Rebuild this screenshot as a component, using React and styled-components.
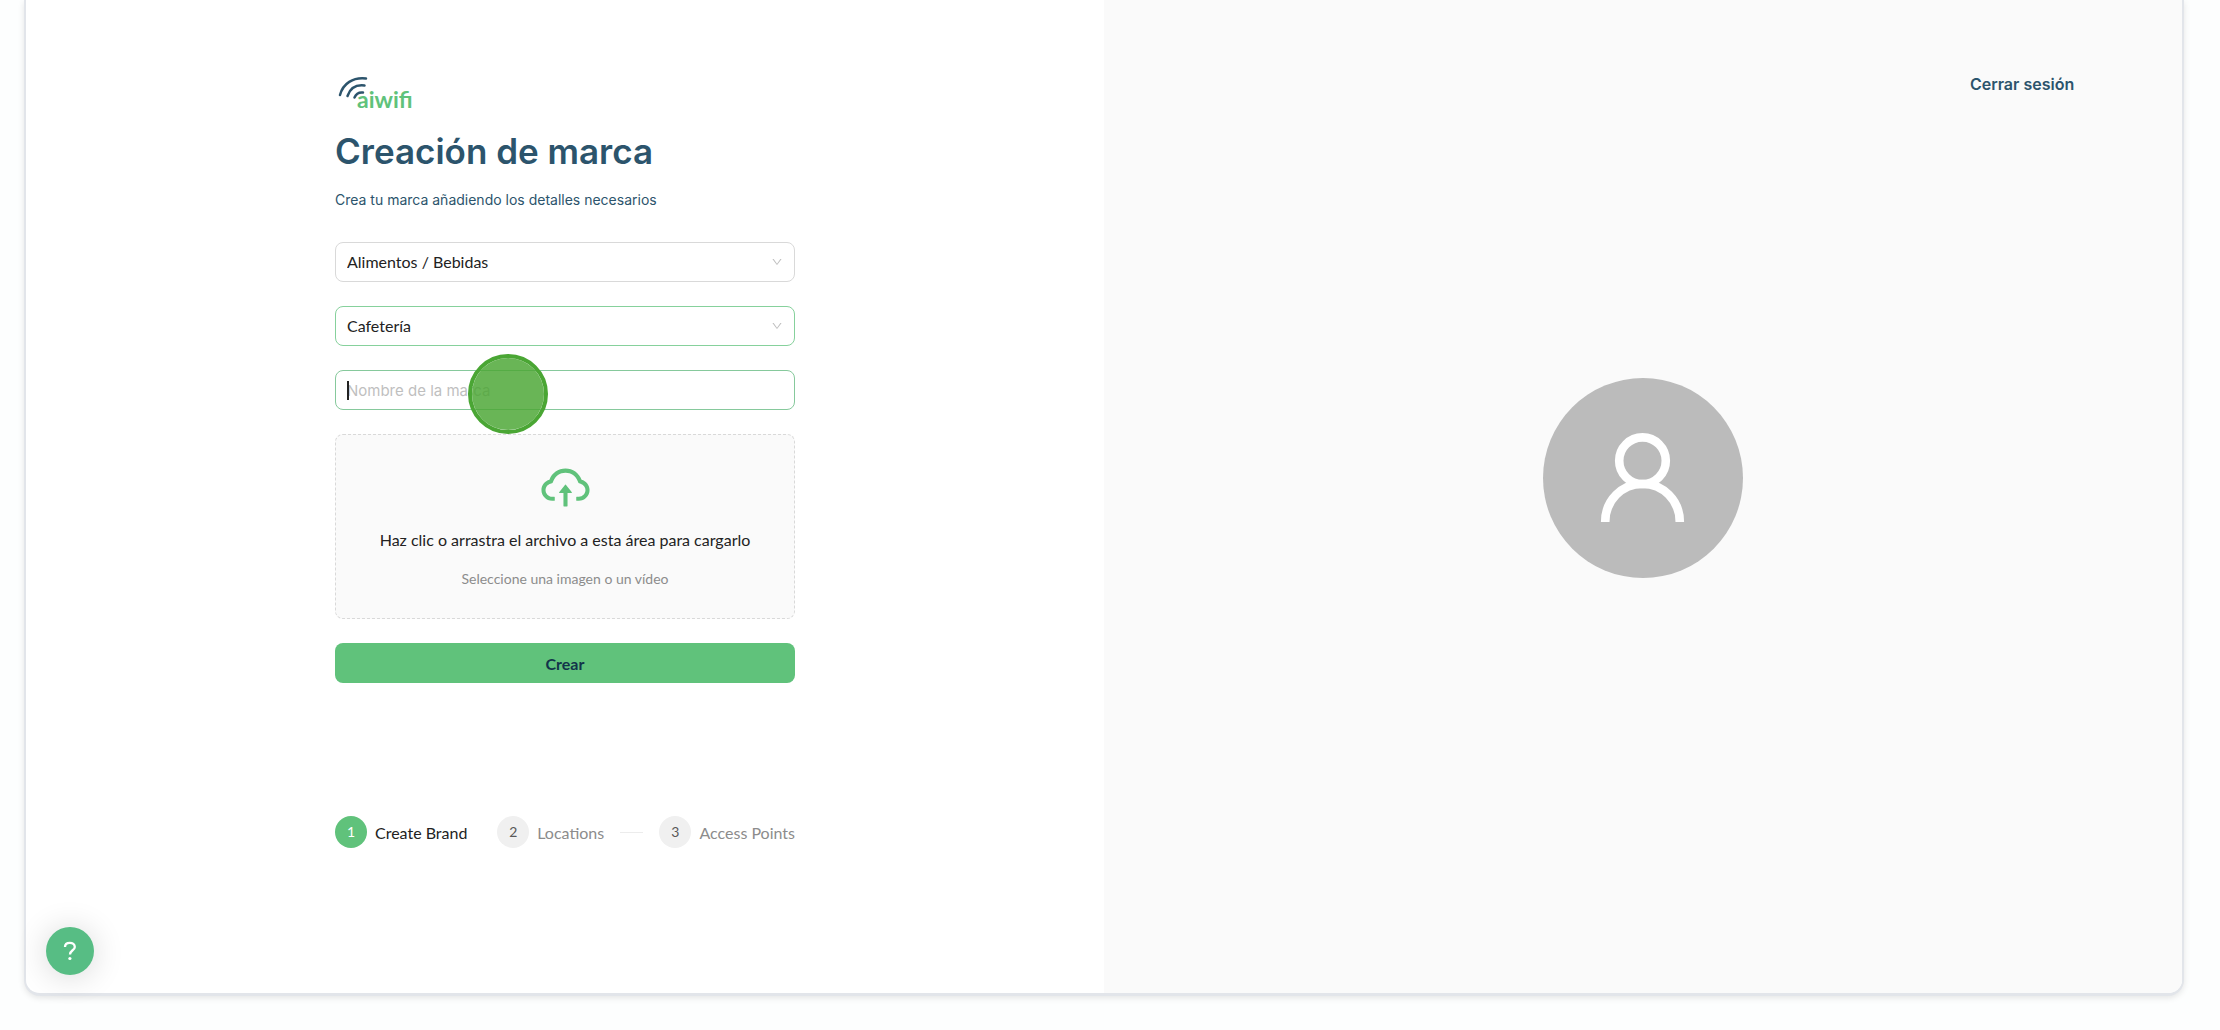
import React, { useState } from 'react';
import styled, { createGlobalStyle } from 'styled-components';
import { AiOutlineCloudUpload, AiOutlineDown } from 'react-icons/ai';

const steps = ['Create Brand', 'Locations', 'Access Points'];

const App = () => {
  const [category, setCategory] = useState('Alimentos / Bebidas');
  const [type, setType] = useState('Cafetería');
  const [name, setName] = useState('');

  return (
    <>
      <GlobalStyle />
      <Card>
        <FormSide>
          <Content>
            <Logo viewBox="0 0 80 40" role="img" aria-label="aiwifi">
              <g fill="none" stroke="#2c546c" strokeWidth="2.5" strokeLinecap="round">
                <path d="M5 23C8 11.500 18 5 31 6.500" />
                <path d="M12.500 24C15 16.500 21 12.500 29.500 13.500" />
                <path d="M19.500 25.500C21 22 24 20 28 20.500" />
              </g>
              <text x="22" y="36">aiwifi</text>
            </Logo>
            <Title>Creación de marca</Title>
            <Subtitle>Crea tu marca añadiendo los detalles necesarios</Subtitle>
            <Form onSubmit={(e) => e.preventDefault()}>
              <Field>
                <Select aria-label="Categoría" value={category} onChange={(e) => setCategory(e.target.value)}>
                  <option>Alimentos / Bebidas</option>
                </Select>
                <Arrow />
              </Field>
              <Field>
                <Select $active aria-label="Tipo" value={type} onChange={(e) => setType(e.target.value)}>
                  <option>Cafetería</option>
                </Select>
                <Arrow />
              </Field>
              <Field>
                <Input
                  aria-label="Nombre de la marca"
                  placeholder="Nombre de la marca"
                  value={name}
                  onChange={(e) => setName(e.target.value)}
                />
                <Caret />
                <ClickMark />
              </Field>
              <Dragger type="button">
                <AiOutlineCloudUpload size={55} color="#60c27b" />
                <DragText>Haz clic o arrastra el archivo a esta área para cargarlo</DragText>
                <DragHint>Seleccione una imagen o un vídeo</DragHint>
              </Dragger>
              <Submit type="submit">Crear</Submit>
            </Form>
            <Steps>
              {steps.map((step, i) => (
                <Step key={step} $active={i === 0} $last={i === steps.length - 1}>
                  <StepNumber $active={i === 0}>{i + 1}</StepNumber>
                  <StepTitle>{step}</StepTitle>
                </Step>
              ))}
            </Steps>
          </Content>
        </FormSide>
        <PreviewSide>
          <Header>
            <Logout href="#">Cerrar sesión</Logout>
          </Header>
          <Preview>
            <Avatar viewBox="0 0 200 200" role="img" aria-label="Avatar">
              <circle cx="100" cy="100" r="100" fill="#bbbbbb" />
              <g fill="none" stroke="#ffffff" strokeWidth="8.6">
                <circle cx="99.500" cy="82.700" r="23.300" />
                <path d="M62.200 144C62.200 122 79 106 99.500 106S136.800 122 136.800 144" />
              </g>
            </Avatar>
          </Preview>
        </PreviewSide>
      </Card>
      <Help type="button" aria-label="Ayuda">
        <svg width="14" height="20" viewBox="0 0 14 20" fill="none">
          <path d="M2 6C2 3.300 4 1.800 6.800 1.800S11.800 3.500 11.800 5.900C11.800 9.300 7 9.300 7 13.500" stroke="#fff" strokeWidth="2.3" />
          <circle cx="6.900" cy="17.500" r="1.600" fill="#fff" />
        </svg>
      </Help>
    </>
  );
};

const GlobalStyle = createGlobalStyle`
  * {
    box-sizing: border-box;
  }

  body {
    margin: 0;
    background-color: #fdfefe;
    font-family: Lato, sans-serif;
    font-size: 16px;
    color: #222222;
  }

  button, input, select {
    font-family: inherit;
    font-size: inherit;
  }
`;

const Card = styled.main`
  display: flex;
  min-height: calc(100vh - 34px);
  margin: 0 36px 34px 24px;
  border: solid #e2e5ea;
  border-width: 0 2px 3px;
  border-radius: 0 0 16px 16px;
  overflow: hidden;
  background-color: #ffffff;
  box-shadow: 0 2px 6px rgba(0, 0, 0, .1);
`;

const FormSide = styled.section`
  width: 50%;
  display: flex;
  justify-content: center;
  padding: 72px 24px 24px;
`;

const Content = styled.div`
  width: 100%;
  max-width: 460px;
`;

const Logo = styled.svg`
  display: block;
  width: 80px;
  height: 40px;

  text {
    font-family: Lato, sans-serif;
    font-size: 23px;
    font-weight: 700;
    fill: #60c27b;
  }
`;

const Title = styled.h1`
  margin: 15px 0;
  font-family: Inter, sans-serif;
  font-size: 35px;
  line-height: 48px;
  font-weight: 600;
  color: #2c546c;
  white-space: nowrap;
`;

const Subtitle = styled.p`
  margin: 0 0 32px;
  font-family: Inter, sans-serif;
  font-size: 14px;
  line-height: 20px;
  color: #2c546c;
`;

const Form = styled.form`
  display: flex;
  flex-direction: column;
  gap: 24px;
`;

const Field = styled.div`
  position: relative;
  display: flex;
  align-items: center;
  height: 40px;
`;

const Select = styled.select`
  appearance: none;
  width: 100%;
  height: 100%;
  padding: 0 11px 2px;
  border: 1px solid ${(props) => (props.$active ? '#86d19c' : '#d9d9d9')};
  border-radius: 8px;
  background-color: #ffffff;
  color: #222222;
  outline: none;
`;

const Arrow = styled(AiOutlineDown)`
  position: absolute;
  right: 12px;
  width: 12px;
  height: 12px;
  color: #bfbfbf;
  pointer-events: none;
`;

const Input = styled.input`
  width: 100%;
  height: 100%;
  padding: 0 11px;
  border: 1px solid #86c99c;
  border-radius: 8px;
  background-color: #ffffff;
  font-family: Inter, sans-serif;
  font-size: 15px;
  outline: none;

  &::placeholder {
    color: #bfbfbf;
    opacity: 1;
  }
`;

const Caret = styled.span`
  position: absolute;
  left: 12px;
  width: 2px;
  height: 19px;
  background-color: #222222;
`;

const ClickMark = styled.span`
  position: absolute;
  z-index: 2;
  top: -16px;
  left: 133px;
  width: 80px;
  height: 80px;
  border: 4px solid #4aa634;
  border-radius: 50%;
  background-color: rgba(74, 166, 52, .83);
  background-clip: padding-box;
  pointer-events: none;
`;

const Dragger = styled.button`
  display: flex;
  flex-direction: column;
  align-items: center;
  padding: 25px 16px 28px;
  border: 1px dashed #d9d9d9;
  border-radius: 8px;
  background-color: #fafafa;
  cursor: pointer;
`;

const DragText = styled.span`
  margin-top: 13px;
  line-height: 24px;
  color: #222222;
`;

const DragHint = styled.span`
  margin-top: 15px;
  font-size: 14px;
  line-height: 23px;
  color: #8c8c8c;
`;

const Submit = styled.button`
  height: 40px;
  border: none;
  border-radius: 8px;
  background-color: #60c27b;
  font-weight: 700;
  color: #12344a;
  cursor: pointer;
`;

const Steps = styled.ol`
  display: flex;
  margin: 133px 0 0;
  padding: 0;
  list-style: none;
`;

const StepTitle = styled.span`
  white-space: nowrap;
`;

const Step = styled.li`
  display: flex;
  align-items: center;
  flex: ${(props) => (props.$last ? 'none' : '1 1 0')};
  gap: 8px;
  min-width: 0;
  overflow: hidden;
  color: ${(props) => (props.$active ? '#222222' : '#8c8c8c')};

  & + & {
    padding-left: 16px;
  }

  &:not(:last-child)::after {
    content: '';
    flex: 1;
    height: 1px;
    margin-left: 8px;
    background-color: ${(props) => (props.$active ? 'transparent' : '#ececec')};
  }
`;

const StepNumber = styled.span`
  flex: none;
  width: 32px;
  border-radius: 50%;
  background-color: ${(props) => (props.$active ? '#60c27b' : '#f0f0f0')};
  font-size: 14px;
  line-height: 32px;
  text-align: center;
  color: ${(props) => (props.$active ? '#ffffff' : '#595959')};
`;

const PreviewSide = styled.section`
  width: 50%;
  display: flex;
  flex-direction: column;
  background-color: #fafafa;
`;

const Header = styled.header`
  display: flex;
  justify-content: flex-end;
  padding: 72px 10% 24px;
`;

const Logout = styled.a`
  font-family: Inter, sans-serif;
  line-height: 24px;
  font-weight: 600;
  color: #2c546c;
  text-decoration: none;
`;

const Preview = styled.div`
  flex: 1;
  display: flex;
  align-items: center;
  justify-content: center;
  padding-bottom: 157px;
`;

const Avatar = styled.svg`
  width: 200px;
  height: 200px;
`;

const Help = styled.button`
  position: fixed;
  left: 46px;
  bottom: 55px;
  display: flex;
  align-items: center;
  justify-content: center;
  width: 48px;
  height: 48px;
  padding: 0;
  border: none;
  border-radius: 50%;
  background-color: #57bd84;
  box-shadow: 0 2px 32px rgba(0, 0, 0, .16);
  cursor: pointer;
`;

export default App;
